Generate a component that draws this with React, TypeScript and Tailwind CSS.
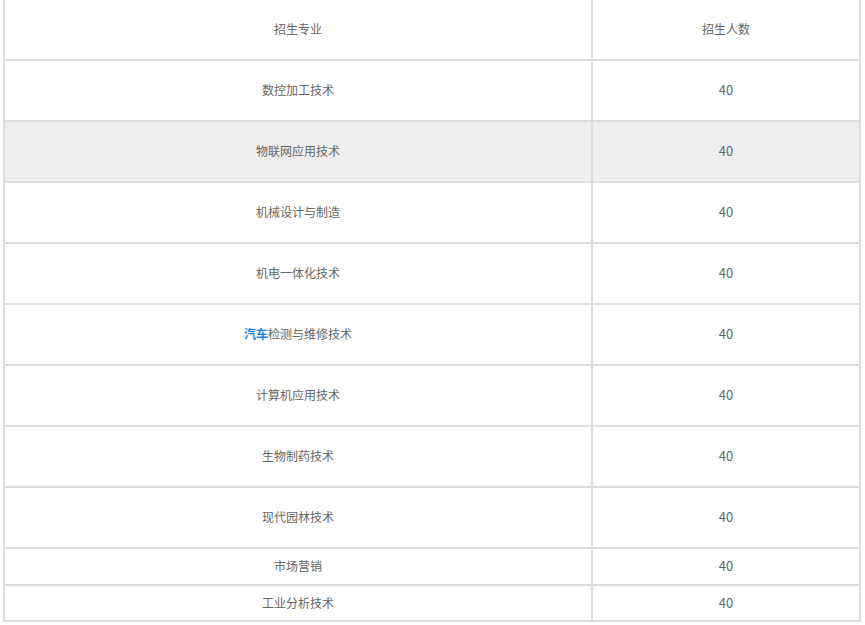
import React from "react";

const rows: { name: React.ReactNode; count: string; h: string; bg?: string; pad: string }[] = [
  { name: "数控加工技术", count: "40", h: "h-[61px]", pad: "pb-[2px]" },
  { name: "物联网应用技术", count: "40", h: "h-[61px]", bg: "bg-[#eeeeee]", pad: "pb-[2px]" },
  { name: "机械设计与制造", count: "40", h: "h-[61px]", pad: "pb-[2px]" },
  { name: "机电一体化技术", count: "40", h: "h-[61px]", pad: "pb-[2px]" },
  {
    name: (
      <>
        <span className="font-bold text-[#1a7fe8]">汽车</span>检测与维修技术
      </>
    ),
    count: "40",
    h: "h-[61px]",
    pad: "pb-[2px]",
  },
  { name: "计算机应用技术", count: "40", h: "h-[61px]", pad: "pb-[2px]" },
  { name: "生物制药技术", count: "40", h: "h-[61px]", pad: "pb-[2px]" },
  { name: "现代园林技术", count: "40", h: "h-[61px]", pad: "pb-[2px]" },
  { name: "市场营销", count: "40", h: "h-[37px]", pad: "pb-[2px]" },
  { name: "工业分析技术", count: "40", h: "h-[36px]", pad: "pb-0" },
];

export default function App() {
  return (
    <div
      className="w-[865px] h-[625px] bg-white overflow-hidden text-[12px] text-[#666666]"
      style={{ fontFamily: '"Noto Sans CJK SC", "Liberation Sans", sans-serif' }}
    >
      <div className="ml-[3px] w-[858px] border-x-2 border-[#dddddd]">
        <div className="flex h-[61px] border-b-2 border-[#dddddd]">
          <div className="w-[588px] border-r-2 border-[#dddddd] flex items-center justify-center pb-[1px]">
            招生专业
          </div>
          <div className="flex-1 flex items-center justify-center pb-[1px]">招生人数</div>
        </div>
        {rows.map((r, i) => (
          <div key={i} className={`flex ${r.h} border-b-2 border-[#dddddd] ${r.bg ?? ""}`}>
            <div className={`w-[588px] border-r-2 border-[#dddddd] flex items-center justify-center ${r.pad}`}>
              {r.name}
            </div>
            <div className={`flex-1 flex items-center justify-center text-[13px] ${r.pad}`}>{r.count}</div>
          </div>
        ))}
      </div>
    </div>
  );
}
